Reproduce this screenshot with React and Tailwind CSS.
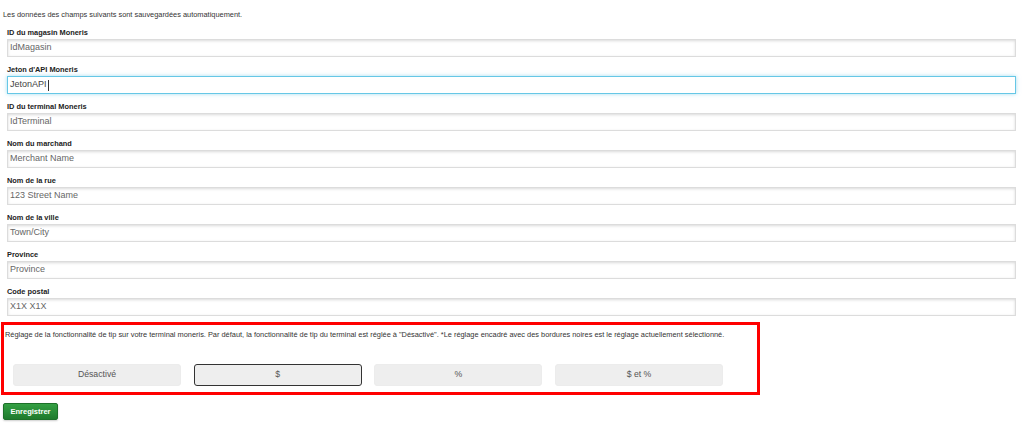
import React from "react";

const fields = [
  { label: "ID du magasin Moneris", value: "IdMagasin" },
  { label: "Jeton d'API Moneris", value: "JetonAPI", focus: true },
  { label: "ID du terminal Moneris", value: "IdTerminal" },
  { label: "Nom du marchand", value: "Merchant Name" },
  { label: "Nom de la rue", value: "123 Street Name" },
  { label: "Nom de la ville", value: "Town/City" },
  { label: "Province", value: "Province" },
  { label: "Code postal", value: "X1X X1X" },
];

const tips = [
  { label: "Désactivé" },
  { label: "$", selected: true },
  { label: "%" },
  { label: "$ et %" },
];

export default function App() {
  return (
    <div
      className="bg-white w-[1024px] h-[427px] overflow-hidden text-[#333]"
      style={{ fontFamily: '"Liberation Sans", Arial, sans-serif' }}
    >
      <div className="pl-[3px] pt-[10px]">
        <p className="text-[7.4px] leading-[10px] text-[#333]">
          Les données des champs suivants sont sauvegardées automatiquement.
        </p>
        <div className="mt-[8px] pl-[4px] w-[1013px]">
          {fields.map((f) => (
            <div key={f.label} className="mb-[8px]">
              <div className="text-[7.4px] leading-[10px] font-bold text-[#222]">
                {f.label}
              </div>
              <div
                className={
                  "mt-[1px] h-[18px] flex items-center pl-[2px] text-[9px] border " +
                  (f.focus
                    ? "border-[#66c7e6] shadow-[0_0_4px_rgba(102,199,230,0.6)] text-[#444] bg-white"
                    : "border-[#dcdcdc] shadow-[inset_0_1px_3px_rgba(0,0,0,0.15)] text-[#666] bg-white")
                }
              >
                <span>{f.value}</span>
                {f.focus && <span className="w-px h-[11px] bg-[#333] ml-px" />}
              </div>
            </div>
          ))}
        </div>
        <div className="-ml-[2px] -mt-[2px] w-[759px] border-[3px] border-[#ff0000] pt-[5px] pb-[6px] pl-px">
          <p className="text-[7.4px] leading-[10px] text-[#333]">
            Réglage de la fonctionnalité de tip sur votre terminal moneris. Par défaut, la fonctionnalité de tip du terminal est réglée à "Désactivé". *Le réglage encadré avec des bordures noires est le réglage actuellement sélectionné.
          </p>
          <div className="mt-[24px] pl-[8px] flex gap-[12.67px]">
            {tips.map((t) => (
              <div
                key={t.label}
                className={
                  "w-[168px] h-[22px] flex items-center justify-center text-[8.7px] text-[#555] bg-[#eeeeee] rounded-[3px] border " +
                  (t.selected ? "border-[#333] border-[1.5px]" : "border-[#ececec]")
                }
              >
                {t.label}
              </div>
            ))}
          </div>
        </div>
        <div className="mt-[8px] w-[55px] h-[17px] flex items-center justify-center text-white font-bold text-[7.5px] bg-gradient-to-b from-[#34a043] to-[#1f7a2d] border border-[#1d7029] rounded-[2px] shadow-[0_1px_2px_rgba(0,0,0,0.2)]">
          Enregistrer
        </div>
      </div>
    </div>
  );
}
